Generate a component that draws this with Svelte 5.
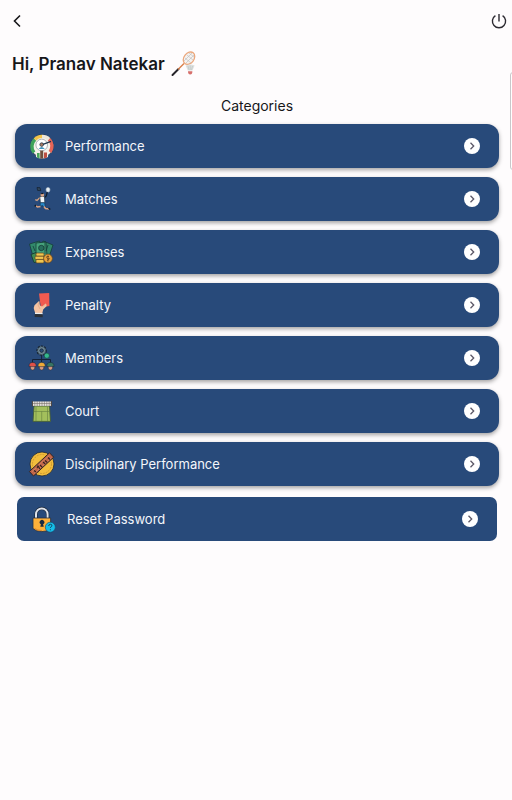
<script>
  const categories = [
    { name: 'Performance', icon: 'performance' },
    { name: 'Matches', icon: 'matches' },
    { name: 'Expenses', icon: 'expenses' },
    { name: 'Penalty', icon: 'penalty' },
    { name: 'Members', icon: 'members' },
    { name: 'Court', icon: 'court' },
    { name: 'Disciplinary Performance', icon: 'discipline' }
  ];
</script>

{#snippet icon(kind)}
  <svg class="icon" viewBox="0 0 27 27" aria-hidden="true">
    {#if kind === 'performance'}
      <circle cx="14" cy="13" r="11.3" fill="#f4f1ea" stroke="#1b2b3d" stroke-width=".8" />
      <g fill="none" stroke-width="3.4">
        <path d="M6 19.5A9.7 9.7 0 0 1 7 6.4" stroke="#3fa45b" />
        <path d="M7 6.4A9.7 9.7 0 0 1 14 3.4" stroke="#f3c449" />
        <path d="M14 3.4A9.7 9.7 0 0 1 21 6.2" stroke="#ece6da" />
        <path d="M21 6.2A9.7 9.7 0 0 1 22 19" stroke="#e76557" />
      </g>
      <circle cx="13.7" cy="12" r="5.8" fill="#fff" stroke="#7d8894" stroke-width=".6" />
      <circle cx="13.7" cy="11.6" r="1.8" fill="#ad7b61" stroke="#23384c" stroke-width=".8" />
      <path d="M10.6 16q3-4 6.2 0z" fill="#4796bd" />
      <path d="M15 11.4l8-3" stroke="#20364c" stroke-width="1.2" />
      <path d="M8 19h12v5q-6 3-12 0z" fill="#f5eee5" />
      <path d="M9 20h2.6v5.4L9 24.4z" fill="#48a65b" />
      <path d="M12.2 17.6h3v8h-3z" fill="#704f3c" />
      <path d="M16 19.5h3v5l-3 1z" fill="#bd4f42" />
    {:else if kind === 'matches'}
      <path d="M9 1.5l3 .2.8 3-3.2-.3z" fill="#31465b" stroke="#14202e" stroke-width=".7" />
      <ellipse cx="20" cy="3.8" rx="2" ry="2.4" fill="#e9f1f5" stroke="#a9b5c3" stroke-width=".6" />
      <path d="M19.3 6l-1 4-2.4 2" fill="none" stroke="#121d29" stroke-width="1.2" />
      <path d="M12 11.5l-3 3-1.7-.8" fill="none" stroke="#d1a183" stroke-width="1.4" />
      <path d="M11.8 10.6l4.6-.2.4 6.4h-4.4z" fill="#f1f6f8" stroke="#1a2836" stroke-width=".6" />
      <circle cx="14.3" cy="8.8" r="1.9" fill="#dda98a" />
      <path d="M12.3 8.3q1.5-3 3.7-.4z" fill="#131c27" />
      <path d="M12.2 16.8h4.4l.7 4h-2.4l-.5-1.5-2 1.2z" fill="#2b8bcb" stroke="#132a43" stroke-width=".5" />
      <path d="M16 20.5l1.5 2 4 .6" fill="none" stroke="#d8a284" stroke-width="1.5" />
      <path d="M12.5 20.5l-3 .4-1.8-1" fill="none" stroke="#d8a284" stroke-width="1.5" />
      <path d="M20.5 22.1l1.8 1.4M7.8 19l-1 1.5" stroke="#111c28" stroke-width="1.4" />
    {:else if kind === 'expenses'}
      <g stroke="#153c39" stroke-width=".8">
        <path d="M1.5 5l10-3 3 11-9 6z" fill="#31886a" />
        <path d="M25 6l-10-4-4 11 10 5z" fill="#31886a" />
        <path d="M8 4l10-1 1 14H8z" fill="#46a37b" />
        <circle cx="13.3" cy="9" r="2.7" fill="#286e5c" />
        <path d="M5 7l2 5M20 6l-2 6M17 2v13" fill="none" />
      </g>
      <path d="M3 15.5l5-2 3 9-5 1z" fill="#438d52" stroke="#194039" />
      <g fill="#f1c650" stroke="#5e4521" stroke-width=".7">
        <rect x="8" y="14" width="8" height="3.3" rx="1" />
        <rect x="7" y="17.2" width="9" height="3.3" rx="1" />
        <rect x="8" y="20.4" width="8" height="3.6" rx="1" />
        <circle cx="20" cy="19.5" r="4.4" fill="#e6a13b" />
      </g>
      <path d="M21 17.5q-3-.8-2.3 1t2.3 1.3-2 1.8M20 16.5v6" fill="none" stroke="#624321" stroke-width=".8" />
    {:else if kind === 'penalty'}
      <path d="M11 1.4l10.2-.5.2 13-8.6 1.6z" fill="#f25b50" />
      <path d="M11 9l-4.5 4.2q-1.2 2-.2 5l1.2 3.8h6.6l1.1-4.4 3.3-3.3q.8-2-1-2.6l-3.5 2.8-2-1z" fill="#f4c3a2" />
      <path d="M11.5 9.5L10 13l2 4M15 14.5l2.5-3" fill="none" stroke="#dfa582" stroke-width=".7" />
      <path d="M7 20.7l7.5.3v1.5L7 22z" fill="#e9edef" />
      <path d="M6.7 22l8 .3v2.9l-8-.3z" fill="#2a3037" />
    {:else if kind === 'members'}
      <circle cx="13.6" cy="5.6" r="4.6" fill="#5e7786" stroke="#14202d" stroke-width="1.2" stroke-dasharray="2.2 1.2" />
      <circle cx="13.6" cy="5.6" r="3.9" fill="#718b98" stroke="#1d2b39" stroke-width=".4" />
      <circle cx="13.6" cy="5.6" r="1.8" fill="#284d77" stroke="#15202c" stroke-width=".7" />
      <circle cx="18.8" cy="10.7" r="2.6" fill="#35b98d" stroke="#163b3b" stroke-width=".6" />
      <path d="M13.6 10v7M4.5 18v-3.5h18V18" fill="none" stroke="#142238" stroke-width="1" />
      {#each [{ x: 4.6, c: '#df5048' }, { x: 13.6, c: '#efaa38' }, { x: 22.4, c: '#377464' }] as p}
        <path d="M{p.x - 2.3} 20h4.6q.2 5-2.3 5t-2.3-5z" fill="#d99c83" stroke="#3b2d31" stroke-width=".5" />
        <path d="M{p.x - 3.6} 21.6q-.2-4.2 3.6-4.2t3.6 4.2z" fill={p.c} stroke="#192536" stroke-width=".5" />
      {/each}
    {:else if kind === 'court'}
      <path d="M6 8h15.5l1 15.4H5z" fill="#a3bf5c" stroke="#455e37" stroke-width=".9" />
      <path d="M8 9v14M19.5 9v14M6 13.5h16M13.7 13.5V23" fill="none" stroke="#64803f" stroke-width=".6" />
      <rect x="4.4" y="3.5" width="19" height="4.4" fill="#e9e5df" />
      <path d="M4.4 5.5h19M6.8 3v5M9.2 3v5M11.6 3v5M14 3v5M16.4 3v5M18.8 3v5M21.2 3v5" stroke="#776e6a" stroke-width=".6" />
      <path d="M4.4 3v5.5M23.4 3v5.5" stroke="#4a403c" stroke-width="1" />
    {:else if kind === 'discipline'}
      <circle cx="14" cy="13" r="12" fill="#f2bd3c" stroke="#1c2637" stroke-width=".8" />
      <circle cx="14" cy="13" r="9.5" fill="none" stroke="#bd8b2b" stroke-width=".7" stroke-dasharray="2 1" />
      <path d="M1.4 20.5L21.5 1.8l4.2 4.4L5.5 25z" fill="#bf6448" stroke="#2f2527" stroke-width="1" />
      <path d="M4 20.7L21.3 4.5M6.2 22.5L23.3 6.8" stroke="#e09267" stroke-width=".7" />
      <path d="M6 19.5l2 1.5M9 17l1-2 2 3M12 14l2.4 2.4M15 11l2.3 2M17 9.5l2.3 2M20 6.5l2 2" fill="none" stroke="#332323" stroke-width="1.2" />
    {:else}
      <path d="M6 13V8.2a5.8 5.8 0 0 1 11.6 0V13" fill="none" stroke="#1c2737" stroke-width="3.2" />
      <path d="M6 13V8.2a5.8 5.8 0 0 1 11.6 0V13" fill="none" stroke="#dfe4ec" stroke-width="2" />
      <path d="M3 12h17.6v10.6q-3 3-8.8 3T3 22.6z" fill="#ffb13a" stroke="#263144" stroke-width=".8" />
      <path d="M4.5 22.5q3 2 7.3 2" fill="none" stroke="#dd862c" />
      <path d="M10.3 20.8l.6-2.5a2.3 2.3 0 1 1 2.2 0l.7 2.5z" fill="#1e2c41" />
      <circle cx="20.3" cy="21.2" r="5" fill="#16bde8" stroke="#174568" stroke-width=".6" />
      <path d="M18.7 20q0-1.7 1.7-1.7t1.5 1.5q0 .8-1.4 1.5v.7M20.4 23.3v1" fill="none" stroke="#12455f" stroke-width="1" />
    {/if}
  </svg>
{/snippet}

{#snippet arrow()}
  <svg class="arrow" viewBox="0 0 16 16" aria-hidden="true">
    <circle cx="8" cy="8" r="8" fill="#fff" />
    <path d="M6.5 4.8L9.7 8l-3.2 3.2" fill="none" stroke="#5c5867" stroke-width="1.3" />
  </svg>
{/snippet}

<main>
  <header>
    <button class="tool" aria-label="Back">
      <svg width="10" height="14" viewBox="0 0 10 14"><path d="M8 1.5L2.5 7 8 12.5" fill="none" stroke="#17171a" stroke-width="1.6" /></svg>
    </button>
    <button class="tool" aria-label="Log out">
      <svg width="16" height="16" viewBox="0 0 16 16"><path d="M8 1v7.5M4.4 2.6a6.6 6.6 0 1 0 7.2 0" fill="none" stroke="#2c2a31" stroke-width="1.4" /></svg>
    </button>
  </header>

  <h1>
    <span>Hi, Pranav Natekar</span>
    <svg width="26" height="26" viewBox="0 0 26 26" aria-hidden="true">
      <path d="M1.5 24l6-6" stroke="#26242a" stroke-width="2" stroke-linecap="round" />
      <path d="M7 18.5l6-6" stroke="#d9804c" stroke-width="1.4" />
      <ellipse cx="18" cy="7.2" rx="5" ry="6.8" transform="rotate(38 18 7.2)" fill="#f4f2f1" stroke="#eba77c" stroke-width="1.3" />
      <path d="M14 7l6 5M16 4l6 5M18 2l5 4M13 10l8-8M15 12l8-8" stroke="#bcb8b7" stroke-width=".6" />
      <path d="M14.6 14.5q4.5-2 9 0l-2.2 5h-4.6z" fill="#dce0df" />
      <path d="M17 15l1 4M19.2 14.5V19M21.5 15l-1 4" stroke="#b9c0c0" stroke-width=".6" />
      <path d="M17 20.2h4.4q0 3.3-2.2 3.3T17 20.2z" fill="#d66f6b" />
    </svg>
  </h1>

  <h2>Categories</h2>

  <nav aria-label="Categories">
    {#each categories as category}
      <button class="card">
        {@render icon(category.icon)}
        <span>{category.name}</span>
        {@render arrow()}
      </button>
    {/each}
    <button class="card reset">
      {@render icon('reset')}
      <span>Reset Password</span>
      {@render arrow()}
    </button>
  </nav>
  <div class="edge-panel"></div>
</main>

<style>
  :global(body) {
    margin: 0;
    background: #fefcfd;
  }
  main {
    position: relative;
    min-height: 100vh;
    overflow: hidden;
    font-family: Inter, sans-serif;
    color: #17171a;
    background: #fefcfd;
  }
  header {
    display: flex;
    justify-content: space-between;
    align-items: center;
    height: 42px;
    padding: 0 5px 0 12px;
  }
  .tool {
    display: flex;
    padding: 0;
    border: 0;
    background: none;
  }
  h1 {
    display: flex;
    align-items: center;
    gap: 6px;
    height: 26px;
    margin: 9px 12px 0;
    font-size: 17px;
    line-height: 24px;
    font-weight: 600;
  }
  h2 {
    margin: 19px 0 8px;
    padding-left: 2px;
    font-size: 14px;
    line-height: 20px;
    font-weight: 400;
    text-align: center;
  }
  nav {
    display: flex;
    flex-direction: column;
    gap: 9px;
    padding: 0 13px 0 15px;
  }
  .card {
    display: flex;
    align-items: center;
    gap: 10px;
    height: 44px;
    padding: 0 19px 0 13px;
    border: 0;
    border-radius: 12px;
    background: #284a7a;
    color: #f4f6fa;
    font-family: inherit;
    font-size: 13px;
    line-height: 20px;
    text-align: left;
    box-shadow: 0 2px 4px rgb(0 0 0 / 36%);
  }
  .card span {
    flex: 1;
  }
  .reset {
    margin: 2px 2px 0;
    border-radius: 7px;
    box-shadow: none;
  }
  .icon {
    width: 27px;
    height: 27px;
  }
  .arrow {
    width: 16px;
    height: 16px;
  }
  .edge-panel {
    position: absolute;
    top: 72px;
    right: -5px;
    width: 5px;
    height: 96px;
    border: 1px solid #c9c7ca;
    border-radius: 3px;
    background: #fff;
  }
</style>
